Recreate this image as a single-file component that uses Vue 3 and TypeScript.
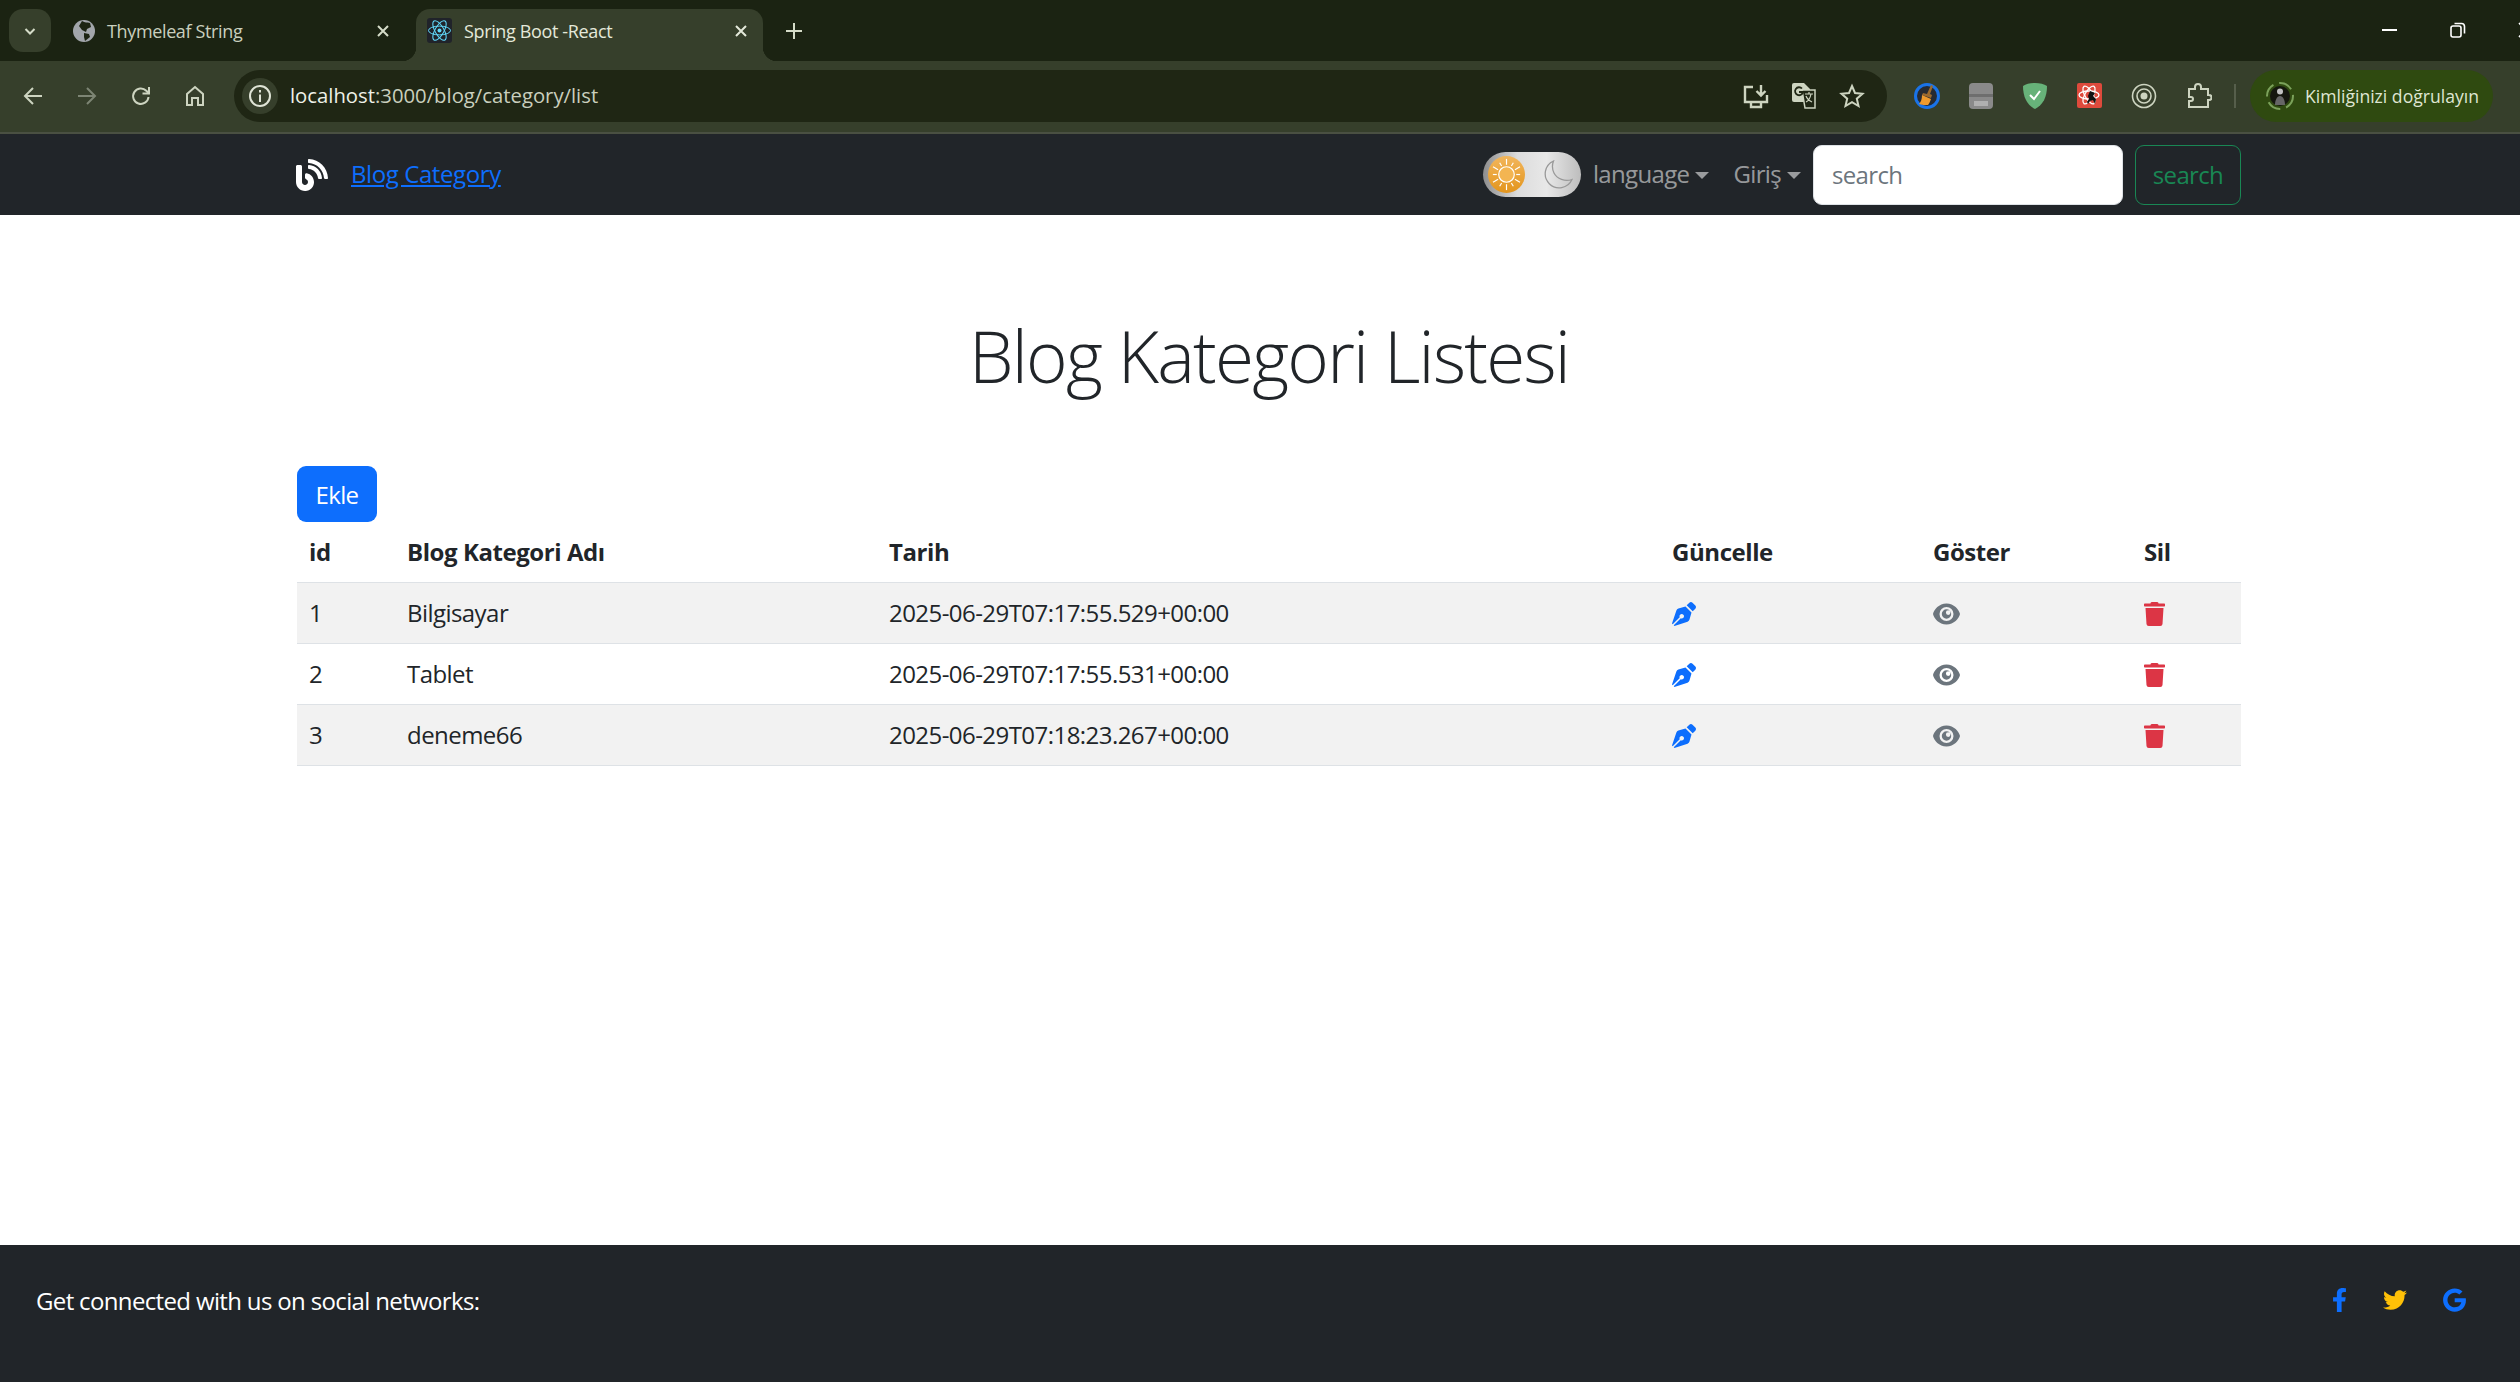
<script setup lang="ts">
interface Category {
  id: number
  name: string
  date: string
}

const categories: Category[] = [
  { id: 1, name: 'Bilgisayar', date: '2025-06-29T07:17:55.529+00:00' },
  { id: 2, name: 'Tablet', date: '2025-06-29T07:17:55.531+00:00' },
  { id: 3, name: 'deneme66', date: '2025-06-29T07:18:23.267+00:00' }
]

const sunRays = Array.from({ length: 12 }, (_, i) => i * 30)
</script>

<template>
  <div class="page">
    <div class="tabstrip">
      <div class="tab-search">
        <svg width="14" height="14" viewBox="0 0 14 14"><path d="M2.5 5l4.5 4.5L11.5 5" fill="none" stroke="#d5dcc8" stroke-width="2" /></svg>
      </div>
      <div class="tab">
        <svg class="favicon" width="22" height="22" viewBox="0 0 22 22">
          <circle cx="11" cy="11" r="11" fill="#a2a6ab" />
          <path d="M9 1c3 2 5 1 8 2l1 4-4 2-1 3-4-2-3-4zM11 13l5 1 1 3-5 4-1-4z" fill="#1c2412" />
        </svg>
        <span class="tab-title">Thymeleaf String</span>
        <svg class="tab-close" width="14" height="14" viewBox="0 0 14 14"><path d="M2 2l10 10M12 2L2 12" stroke="#d5dcc8" stroke-width="2" /></svg>
      </div>
      <div class="tab active">
        <svg class="favicon" width="25" height="25" viewBox="0 0 25 25">
          <rect width="25" height="25" rx="3" fill="#20232a" />
          <circle cx="12.5" cy="12.5" r="2" fill="#61dafb" />
          <g fill="none" stroke="#61dafb" stroke-width="1">
            <ellipse cx="12.5" cy="12.5" rx="11" ry="4.4" />
            <ellipse cx="12.5" cy="12.5" rx="11" ry="4.4" transform="rotate(60 12.5 12.5)" />
            <ellipse cx="12.5" cy="12.5" rx="11" ry="4.4" transform="rotate(120 12.5 12.5)" />
          </g>
        </svg>
        <span class="tab-title">Spring Boot -React</span>
        <svg class="tab-close" width="14" height="14" viewBox="0 0 14 14"><path d="M2 2l10 10M12 2L2 12" stroke="#e4e9da" stroke-width="2" /></svg>
      </div>
      <svg class="new-tab" width="16" height="16" viewBox="0 0 16 16"><path d="M8 0v16M0 8h16" stroke="#d5dcc8" stroke-width="2" /></svg>
      <div class="window-controls">
        <svg width="16" height="16" viewBox="0 0 16 16"><path d="M0 8h15" stroke="#fff" stroke-width="2" /></svg>
        <svg class="restore" width="16" height="16" viewBox="0 0 16 16" fill="none" stroke="#fff" stroke-width="1.6"><rect x="1" y="4" width="10" height="11" rx="2" /><path d="M4.5 1.5h7a3 3 0 0 1 3 3v7" /></svg>
        <svg class="win-close" width="16" height="16" viewBox="0 0 16 16"><path d="M1 1l14 14M15 1L1 15" stroke="#fff" stroke-width="1.6" /></svg>
      </div>
    </div>

    <div class="toolbar">
      <svg class="nav-btn" width="22" height="22" viewBox="0 0 22 22" fill="none" stroke="#cdd4c0" stroke-width="2"><path d="M20 11H3M11 3l-8 8 8 8" /></svg>
      <svg class="nav-btn" width="22" height="22" viewBox="0 0 22 22" fill="none" stroke="#7d8574" stroke-width="2"><path d="M2 11h17M11 3l8 8-8 8" /></svg>
      <svg class="nav-btn" width="22" height="22" viewBox="0 0 22 22" fill="none" stroke="#cdd4c0" stroke-width="2"><path d="M18.5 12a7.7 7.7 0 1 1-2.2-6.2L19 8.5" /><path d="M19 2v6.5h-6.5" /></svg>
      <svg class="nav-btn" width="22" height="22" viewBox="0 0 22 22" fill="none" stroke="#cdd4c0" stroke-width="2"><path d="M3 20V9l8-7 8 7v11h-5v-7H8v7z" /></svg>
      <div class="omnibox">
        <span class="site-info">
          <svg width="24" height="24" viewBox="0 0 24 24" fill="none" stroke="#dfe4d6" stroke-width="2"><circle cx="12" cy="12" r="10" /><path d="M12 10.5V18M12 6v2.5" /></svg>
        </span>
        <span class="url"><b>localhost</b>:3000/blog/category/list</span>
        <div class="omni-actions">
          <svg width="26" height="26" viewBox="0 0 26 26" fill="none" stroke="#cdd4c0" stroke-width="2.4"><path d="M10 4H2v15h22v-7M8 24h10v-5H8zM18 2v10M13.500 8l4.500 4.500L22.500 8" /></svg>
          <svg width="26" height="28" viewBox="0 0 26 28">
            <path d="M3 1h10l6 6v13H3a2 2 0 0 1-2-2V3a2 2 0 0 1 2-2z" fill="#cdd4c0" />
            <path d="M11 8h13v18H14z" fill="#1f2614" stroke="#cdd4c0" stroke-width="1.5" />
            <path d="M14 12h8M18 10v2M20 12c-1 5-3 7-5 8M15 14c1 3 4 5 6 6" fill="none" stroke="#cdd4c0" stroke-width="1.2" />
            <path d="M11 6.500a4 4 0 1 0 1 3.500H8" fill="none" stroke="#1f2614" stroke-width="1.8" />
          </svg>
          <svg width="26" height="26" viewBox="0 0 26 26" fill="none" stroke="#cdd4c0" stroke-width="2"><path d="M13 3l3 7 7.500.7-5.700 5 1.700 7.300-6.500-3.900L6.500 23l1.700-7.300-5.700-5L10 10z" /></svg>
        </div>
      </div>
      <div class="extensions">
        <svg width="26" height="26" viewBox="0 0 26 26">
          <circle cx="13" cy="13" r="11.5" fill="#262b33" stroke="#1a73e8" stroke-width="3" />
          <path d="M17 2l2 1-3 8 2 1-1 3-9-3 1-2 4 1z" fill="#9b6a2f" />
          <path d="M8 12l9 4c-1 3-2 5-3 6-3 0-6 0-9-1 2-2 3-5 3-9z" fill="#ef9a2d" />
        </svg>
        <svg width="24" height="26" viewBox="0 0 24 26">
          <rect width="24" height="26" rx="4" fill="#8a8a8a" />
          <rect y="11" width="24" height="3" fill="#6e6e6e" />
          <rect x="5" y="18" width="14" height="5" fill="#b0b0b0" />
        </svg>
        <svg width="26" height="26" viewBox="0 0 26 26">
          <path d="M13 0C8 0 4 1 1 3c0 11 4 19 12 23 8-4 12-12 12-23-3-2-7-3-12-3z" fill="#67b279" />
          <path d="M8 12l4 4 6-8" fill="none" stroke="#fff" stroke-width="2" />
        </svg>
        <svg width="25" height="25" viewBox="0 0 25 25">
          <rect width="25" height="25" rx="2" fill="#de4a3c" />
          <g fill="none" stroke="#fff" stroke-width="1.3">
            <ellipse cx="12" cy="12" rx="10" ry="4" />
            <ellipse cx="12" cy="12" rx="10" ry="4" transform="rotate(60 12 12)" />
            <ellipse cx="12" cy="12" rx="10" ry="4" transform="rotate(120 12 12)" />
          </g>
          <path d="M13 8l5 2-2 3 3 3-1 5-2-4-3 1-2 3-1-2 2-3-1-3z" fill="#111" />
        </svg>
        <svg width="26" height="26" viewBox="0 0 26 26" fill="none" stroke="#cdd4c0" stroke-width="1.6">
          <circle cx="13" cy="13" r="11.500" />
          <circle cx="13" cy="13" r="7" />
          <circle cx="13" cy="13" r="3.500" fill="#cdd4c0" stroke="none" />
        </svg>
        <svg width="26" height="26" viewBox="0 0 26 26" fill="none" stroke="#cdd4c0" stroke-width="2"><path d="M3 6h6V4a3 3 0 0 1 6 0v2h7v6h1a2.500 2.500 0 0 1 0 5h-1v7H3v-6h2a2 2 0 0 0 0-4H3z" /></svg>
      </div>
      <span class="toolbar-sep"></span>
      <div class="profile">
        <svg class="avatar" width="28" height="28" viewBox="0 0 28 28">
          <circle cx="14" cy="14" r="13" fill="none" stroke="#7ba25a" stroke-width="2" stroke-dasharray="14 6" />
          <circle cx="14" cy="14" r="10" fill="#15170f" />
          <circle cx="14" cy="9.5" r="3" fill="#c2c2c2" />
          <path d="M9 23c0-5 2-9 5-9s5 4 5 9z" fill="#666" />
        </svg>
        <span>Kimliğinizi doğrulayın</span>
      </div>
    </div>

    <nav class="navbar">
      <div class="container nav-inner">
        <svg class="brand-icon" width="32" height="32" viewBox="0 0 512 512" fill="#fff">
          <path d="M172.2 226.8c-14.6-2.9-28.2 8.9-28.2 23.8V301c0 10.2 7.1 18.4 16.7 22 18.2 6.8 31.3 24.4 31.3 45 0 26.5-21.5 48-48 48s-48-21.5-48-48V120c0-13.3-10.7-24-24-24H24c-13.3 0-24 10.7-24 24v248c0 89.5 82.1 160.2 175 140.7 54.4-11.4 98.3-55.4 109.7-109.7 17.4-82.9-37-157.2-112.5-172.2zM209 0c-9.2-.5-17 6.8-17 16v31.6c0 8.5 6.6 15.5 15 15.9 129.4 7 233.4 112 240.9 241.5.5 8.4 7.5 15 15.9 15h32.1c9.2 0 16.5-7.8 16-17C503.4 139.8 372.2 8.6 209 0zm.3 96c-9.3-.7-17.3 6.7-17.3 16.1v32.1c0 8.4 6.5 15.3 14.8 15.9 76.8 6.3 138 68.2 144.9 145.2.8 8.3 7.6 14.7 15.9 14.7h32.2c9.3 0 16.8-8 16.1-17.3-8.4-110.1-96.5-198.2-206.6-206.7z" />
        </svg>
        <a class="brand-link" href="#">Blog Category</a>
        <div class="nav-right">
          <div class="theme-toggle">
            <svg class="sun" width="37" height="37" viewBox="0 0 38 38">
              <circle cx="19" cy="19" r="19" fill="url(#sunFill)" />
              <defs>
                <linearGradient id="sunFill" x1="0" y1="0" x2="0" y2="1">
                  <stop offset="0" stop-color="#f2b65c" />
                  <stop offset="1" stop-color="#e3951d" />
                </linearGradient>
              </defs>
              <circle cx="19" cy="19" r="8" fill="#f3b552" stroke="#fff" stroke-width="1.2" />
              <path v-for="(deg, i) in sunRays" :key="deg" :d="i % 2 ? 'M19 5v4' : 'M19 3v6'" stroke="#fff" stroke-width="1.2" :transform="`rotate(${deg} 19 19)`" />
            </svg>
            <svg class="moon" width="30" height="29" viewBox="0 0 30 29"><path d="M10.5 1A14 14 0 1 0 29 19.500C22 22 14 19 11 13 9 9 9 5 10.500 1z" fill="none" stroke="#999" stroke-width="1.300" /></svg>
          </div>
          <a class="nav-link dropdown" href="#">language</a>
          <a class="nav-link dropdown" href="#">Giriş</a>
          <form class="search-form" @submit.prevent>
            <input class="search-input" type="search" placeholder="search" />
            <button class="search-btn" type="submit">search</button>
          </form>
        </div>
      </div>
    </nav>

    <main class="container content">
      <h1 class="title">Blog Kategori Listesi</h1>
      <button class="add-btn" type="button">Ekle</button>
      <table class="category-table">
        <colgroup>
          <col class="col-id" />
          <col class="col-name" />
          <col class="col-date" />
          <col class="col-edit" />
          <col class="col-show" />
          <col class="col-delete" />
        </colgroup>
        <thead>
          <tr>
            <th>id</th>
            <th>Blog Kategori Adı</th>
            <th>Tarih</th>
            <th>Güncelle</th>
            <th>Göster</th>
            <th>Sil</th>
          </tr>
        </thead>
        <tbody>
          <tr v-for="category in categories" :key="category.id">
            <td>{{ category.id }}</td>
            <td>{{ category.name }}</td>
            <td>{{ category.date }}</td>
            <td>
              <svg class="row-icon" width="24" height="24" viewBox="0 0 512 512" fill="#0d6efd">
                <path d="M136.6 138.79a64.003 64.003 0 0 0-43.31 41.35L0 460l14.69 14.69L164.8 324.58c-2.99-6.26-4.8-13.18-4.8-20.58 0-26.51 21.49-48 48-48s48 21.49 48 48-21.49 48-48 48c-7.4 0-14.32-1.81-20.58-4.8L37.31 497.31 52 512l279.86-93.29a64.003 64.003 0 0 0 41.35-43.31L416 224 288 96l-151.4 42.79zm361.34-64.62l-60.11-60.11c-18.75-18.75-49.16-18.75-67.91 0l-56.55 56.55 128.02 128.02 56.55-56.55c18.75-18.75 18.75-49.15 0-67.91z" />
              </svg>
            </td>
            <td>
              <svg class="row-icon" width="27" height="24" viewBox="0 0 27 24" fill="#6c757d" fill-rule="evenodd">
                <path d="M13.500 1.500C21 1.500 26 7.500 27 12c-1 4.500-6 10.500-13.500 10.500S1 16.500 0 12C1 7.500 6 1.500 13.500 1.500zM13.500 5a7 7 0 1 0 0 14 7 7 0 0 0 0-14zM13.500 7.300a4.700 4.700 0 1 0 0 9.400 4.700 4.700 0 0 0 0-9.400zM15.200 8.300a2.300 2.300 0 1 1 0 4.600 2.300 2.300 0 0 1 0-4.600z" />
              </svg>
            </td>
            <td>
              <svg class="row-icon" width="21" height="24" viewBox="0 0 448 512" fill="#dc3545">
                <path d="M432 32H312l-9.4-18.7A24 24 0 0 0 281.1 0H166.8a23.72 23.72 0 0 0-21.4 13.3L136 32H16A16 16 0 0 0 0 48v32a16 16 0 0 0 16 16h416a16 16 0 0 0 16-16V48a16 16 0 0 0-16-16zM53.2 467a48 48 0 0 0 47.9 45h245.8a48 48 0 0 0 47.9-45L416 128H32z" />
              </svg>
            </td>
          </tr>
        </tbody>
      </table>
    </main>

    <footer class="footer">
      <span>Get connected with us on social networks:</span>
      <div class="socials">
        <svg width="15" height="24" viewBox="0 0 320 512" fill="#0d6efd">
          <path d="M279.14 288l14.22-92.66h-88.91v-60.13c0-25.35 12.42-50.06 52.24-50.06h40.42V6.26S260.43 0 225.36 0c-73.22 0-121.08 44.38-121.08 124.72v70.62H22.89V288h81.39v224h100.17V288z" />
        </svg>
        <svg width="24" height="24" viewBox="0 0 512 512" fill="#ffc107">
          <path d="M459.37 151.716c.325 4.548.325 9.097.325 13.645 0 138.72-105.583 298.558-298.558 298.558-59.452 0-114.68-17.219-161.137-47.106 8.447.974 16.568 1.299 25.34 1.299 49.055 0 94.213-16.568 130.274-44.832-46.132-.975-84.792-31.188-98.112-72.772 6.498.974 12.995 1.624 19.818 1.624 9.421 0 18.843-1.3 27.614-3.573-48.081-9.747-84.143-51.98-84.143-102.985v-1.299c13.969 7.797 30.214 12.67 47.431 13.319-28.264-18.843-46.781-51.005-46.781-87.391 0-19.492 5.197-37.36 14.294-52.954 51.655 63.675 129.3 105.258 216.365 109.807-1.624-7.797-2.599-15.918-2.599-24.04 0-57.828 46.782-104.934 104.934-104.934 30.213 0 57.502 12.67 76.67 33.137 23.715-4.548 46.456-13.32 66.599-25.34-7.798 24.366-24.366 44.833-46.132 57.827 21.117-2.273 41.584-8.122 60.426-16.243-14.292 20.791-32.161 39.308-52.628 54.253z" />
        </svg>
        <svg width="23" height="24" viewBox="0 0 488 512" fill="#0d6efd">
          <path d="M488 261.8C488 403.3 391.1 504 248 504 110.8 504 0 393.2 0 256S110.8 8 248 8c66.8 0 123 24.5 166.3 64.9l-67.5 64.9C258.5 52.6 94.3 116.6 94.3 256c0 86.5 69.1 156.6 153.7 156.6 98.2 0 135-70.4 140.8-106.9H248v-85.3h236.1c2.3 12.7 3.9 24.9 3.9 41.4z" />
        </svg>
      </div>
    </footer>
  </div>
</template>

<style>
html,
body {
  margin: 0;
  background: #fff;
}
</style>

<style scoped>
.page {
  display: flex;
  flex-direction: column;
  height: 100vh;
  overflow: hidden;
  font-family: 'Open Sans', 'Noto Sans', sans-serif;
  font-size: 24px;
  letter-spacing: -0.027em;
  color: #212529;
}

/* browser chrome */
.tabstrip {
  display: flex;
  align-items: flex-start;
  height: 61px;
  padding: 9px 0 0 9px;
  box-sizing: border-box;
  background: #1b2312;
  color: #c9cfbe;
  font-size: 18px;
  letter-spacing: -0.02em;
  flex-shrink: 0;
}

.tab-search {
  display: flex;
  align-items: center;
  justify-content: center;
  width: 42px;
  height: 43px;
  border-radius: 14px;
  background: #363f2b;
}

.tab {
  display: flex;
  align-items: center;
  width: 347px;
  height: 52px;
  padding: 0 15px 9px 11px;
  box-sizing: border-box;
  position: relative;
  border-radius: 14px 14px 0 0;
}

.tab:not(.active) {
  margin: 0 19px 0 9px;
  width: 337px;
  padding-left: 13px;
  padding-right: 7px;
}

.tab.active {
  background: #363f2b;
  color: #e4e9da;
}

.tab.active::before,
.tab.active::after {
  content: '';
  position: absolute;
  bottom: 0;
  width: 14px;
  height: 14px;
  background: radial-gradient(circle at 0 0, #1b2312 14px, #363f2b 14.5px);
}

.tab.active::before {
  left: -14px;
}

.tab.active::after {
  right: -14px;
  background: radial-gradient(circle at 100% 0, #1b2312 14px, #363f2b 14.5px);
}

.tab-title {
  margin-left: 12px;
  flex: 1;
  white-space: nowrap;
}

.new-tab {
  margin: 14px 0 0 23px;
}

.window-controls {
  display: flex;
  align-items: center;
  gap: 52px;
  margin-left: auto;
  margin-right: -14px;
  padding-top: 13px;
}

.toolbar {
  display: flex;
  align-items: center;
  height: 73px;
  padding: 0 0 2px 22px;
  box-sizing: border-box;
  background: #363f2b;
  border-bottom: 2px solid #4a5042;
  flex-shrink: 0;
}

.nav-btn {
  margin-right: 32px;
}

.omnibox {
  display: flex;
  align-items: center;
  width: 1653px;
  height: 52px;
  margin-left: -4px;
  padding: 0 22px 0 8px;
  box-sizing: border-box;
  border-radius: 26px;
  background: #1f2614;
  color: #c9cfbe;
  font-size: 20.3px;
  letter-spacing: 0;
}

.site-info {
  display: flex;
  align-items: center;
  justify-content: center;
  width: 36px;
  height: 36px;
  border-radius: 50%;
  background: #363f2b;
}

.url {
  margin-left: 12px;
  margin-top: -2px;
}

.url b {
  font-weight: 400;
  color: #eef1e8;
}

.omni-actions {
  display: flex;
  align-items: center;
  gap: 22px;
  margin-left: auto;
}

.extensions {
  display: flex;
  align-items: center;
  gap: 29px;
  margin-left: 27px;
}

.toolbar-sep {
  width: 2px;
  height: 24px;
  margin: 0 14px 0 22px;
  background: #565e4b;
}

.profile {
  display: flex;
  align-items: center;
  gap: 11px;
  width: 243px;
  height: 52px;
  padding-left: 16px;
  box-sizing: border-box;
  border-radius: 26px;
  background: #2f4a10;
  color: #dfe6d2;
  font-size: 17.6px;
  letter-spacing: 0;
  white-space: nowrap;
}

/* page */
.container {
  width: 1980px;
  margin-left: 279px;
  padding: 0 18px;
  box-sizing: border-box;
}

.navbar {
  height: 81px;
  background: #212529;
  flex-shrink: 0;
}

.nav-inner {
  display: flex;
  align-items: center;
  height: 100%;
}

.brand-icon {
  margin: 1px 0 0 -1px;
}

.brand-link {
  margin: -2px 0 0 23px;
  color: #0d6efd;
  letter-spacing: -0.017em;
}

.nav-right {
  display: flex;
  align-items: center;
  margin-left: auto;
}

.theme-toggle {
  display: flex;
  align-items: center;
  justify-content: space-between;
  width: 98px;
  height: 45px;
  padding: 0 8px 0 5px;
  margin-right: 12px;
  box-sizing: border-box;
  border-radius: 23px;
  background: linear-gradient(90deg, #8d8d8d 0, #dcdcdc 35%, #e8e8e8 65%, #bdbdbd 100%);
}

.nav-link {
  margin-top: -2px;
  color: rgba(255, 255, 255, 0.55);
  text-decoration: none;
}

.dropdown {
  margin-right: 12px;
}

.dropdown + .dropdown {
  margin-left: 12px;
}

.dropdown::after {
  content: '';
  display: inline-block;
  margin-left: 6px;
  vertical-align: 4px;
  border-top: 7px solid;
  border-left: 7px solid transparent;
  border-right: 7px solid transparent;
}

.search-form {
  display: flex;
  gap: 12px;
}

.search-input {
  width: 310px;
  height: 60px;
  padding: 0 18px;
  box-sizing: border-box;
  border: 1.5px solid #dee2e6;
  border-radius: 9px;
  background: #fff;
  font: inherit;
  letter-spacing: inherit;
  color: #212529;
  outline: none;
}

.search-input::placeholder {
  color: #6c757d;
  opacity: 1;
}

.search-btn {
  width: 106px;
  height: 60px;
  padding: 0;
  border: 1.5px solid #198754;
  border-radius: 9px;
  background: transparent;
  color: #198754;
  font: inherit;
  letter-spacing: inherit;
}

.content {
  flex: 1;
}

.title {
  margin: 98px 0 67px;
  font-size: 71px;
  font-weight: 300;
  letter-spacing: -0.025em;
  line-height: 86px;
  text-align: center;
}

.add-btn {
  display: block;
  width: 80px;
  height: 56px;
  padding: 0;
  border: none;
  border-radius: 9px;
  background: #0d6efd;
  color: #fff;
  font: inherit;
  letter-spacing: inherit;
}

.category-table {
  width: 1944px;
  table-layout: fixed;
  border-collapse: collapse;
}

.col-id {
  width: 98px;
}

.col-name {
  width: 482px;
}

.col-date {
  width: 783px;
}

.col-edit {
  width: 261px;
}

.col-show {
  width: 211px;
}

.col-delete {
  width: 109px;
}

.category-table th,
.category-table td {
  height: 61px;
  padding: 0 12px;
  box-sizing: border-box;
  text-align: left;
  border-bottom: 1.5px solid #dee2e6;
  letter-spacing: -0.023em;
}

.category-table th {
  height: 60px;
  font-weight: 700;
  letter-spacing: -0.018em;
}

.category-table tbody tr:nth-child(odd) {
  background: #f2f2f2;
}

.row-icon {
  display: block;
  margin-top: 2px;
}

.footer {
  display: flex;
  justify-content: space-between;
  height: 137px;
  padding: 39px 54px 0 36px;
  box-sizing: border-box;
  background: #212529;
  color: #fff;
  flex-shrink: 0;
}

.socials {
  display: flex;
  align-items: flex-start;
  gap: 36px;
  padding-top: 4px;
}
</style>
